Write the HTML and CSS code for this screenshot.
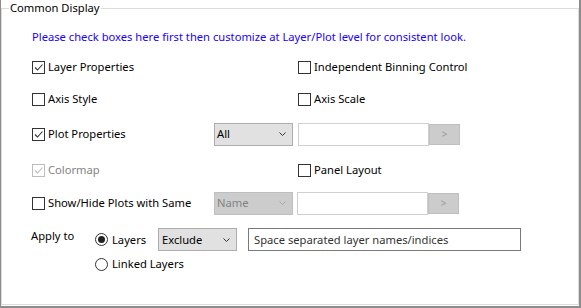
FILE: index.html
```html
<!DOCTYPE html>
<html lang="en">
<head>
    <meta charset="UTF-8">
    <title>Common Display</title>
    <link rel="stylesheet" href="styles.css">
</head>
<body>
    <div class="window">
        <fieldset class="group">
            <legend>Common Display</legend>
            <div class="content">
                <p class="hint">Please check boxes here first then customize at Layer/Plot level for consistent look.</p>

                <div class="options">
                    <label class="check span">
                        <span class="box"><svg width="11" height="11"><polyline points="2,5.5 4.5,8 9.5,2.5" /></svg></span>
                        Layer Properties
                    </label>
                    <label class="check right"><span class="box"></span>Independent Binning Control</label>

                    <label class="check span"><span class="box"></span>Axis Style</label>
                    <label class="check right"><span class="box"></span>Axis Scale</label>

                    <label class="check">
                        <span class="box"><svg width="11" height="11"><polyline points="2,5.5 4.5,8 9.5,2.5" /></svg></span>
                        Plot Properties
                    </label>
                    <div class="select">
                        <span>All</span>
                        <svg width="7" height="4"><polyline points="0.5,0.5 3.5,3.5 6.5,0.5" /></svg>
                    </div>
                    <div class="field">
                        <input type="text">
                        <span class="go">&gt;</span>
                    </div>

                    <label class="check span off">
                        <span class="box"><svg width="11" height="11"><polyline points="2,5.5 4.5,8 9.5,2.5" /></svg></span>
                        Colormap
                    </label>
                    <label class="check right"><span class="box"></span>Panel Layout</label>

                    <label class="check"><span class="box"></span>Show/Hide Plots with Same</label>
                    <div class="select off">
                        <span>Name</span>
                        <svg width="7" height="4"><polyline points="0.5,0.5 3.5,3.5 6.5,0.5" /></svg>
                    </div>
                    <div class="field shift">
                        <input type="text">
                        <span class="go">&gt;</span>
                    </div>
                </div>

                <div class="apply">
                    <span class="apply-label">Apply to</span>
                    <div class="apply-options">
                        <div class="apply-row">
                            <label class="radio"><span class="dot on"></span>Layers</label>
                            <div class="select wide">
                                <span>Exclude</span>
                                <svg width="7" height="4"><polyline points="0.5,0.5 3.5,3.5 6.5,0.5" /></svg>
                            </div>
                            <input type="text" class="names" value="Space separated layer names/indices">
                        </div>
                        <label class="radio linked"><span class="dot"></span>Linked Layers</label>
                    </div>
                </div>
            </div>
        </fieldset>
    </div>
</body>
</html>
```

FILE: styles.css
```css
body {
    margin: 0;
    font-family: "Noto Sans", sans-serif;
    font-size: 11.2px;
    line-height: 16px;
    color: #000;
    background: #fff;
}
.window {
    height: 308px;
    box-sizing: border-box;
    border-left: 1px solid #8c8c8c;
    border-right: 2px solid #8c8c8c;
    border-bottom: 2px solid #8c8c8c;
}
.group {
    margin: 0;
    padding: 0;
    min-width: 0;
    height: 305px;
    box-sizing: border-box;
    border: 1px solid #dcdcdc;
}
legend {
    margin-left: 7px;
    padding: 0 1px;
    line-height: 16px;
}
.content {
    padding-left: 30px;
}
.hint {
    margin: 13px 0 0;
    color: #2000ff;
}
.options {
    display: grid;
    grid-template-columns: 182px 84px 1fr;
    grid-template-rows: 32px 32px 38px 34px 32px;
    align-items: center;
    margin-top: 6px;
}
.check {
    display: flex;
    align-items: center;
    gap: 3px;
}
.check.span {
    grid-column: 1 / 3;
}
.check.right {
    grid-column: 3;
}
.box {
    display: block;
    width: 13px;
    height: 13px;
    box-sizing: border-box;
    border: 1px solid #333;
    background: #fff;
}
.box svg {
    display: block;
}
.box polyline {
    fill: none;
    stroke: #333;
    stroke-width: 1.1;
}
.check.off {
    color: #838383;
}
.check.off .box {
    border-color: #bcbcbc;
}
.check.off .box polyline {
    stroke: #bcbcbc;
}
.select {
    width: 79px;
    height: 23px;
    box-sizing: border-box;
    border: 1px solid #adadad;
    background: #e1e1e1;
    display: flex;
    align-items: center;
    justify-content: space-between;
    padding: 0 6px 0 2px;
}
.select svg {
    display: block;
}
.select polyline {
    fill: none;
    stroke: #333;
    stroke-width: 1;
}
.select.off {
    background: #cccccc;
    border-color: #bfbfbf;
    color: #838383;
}
.select.off polyline {
    stroke: #a8a8a8;
}
.select.wide {
    padding-left: 3px;
}
.field {
    display: flex;
    align-items: center;
}
.field.shift {
    margin-left: -1px;
}
input {
    margin: 0;
    height: 23px;
    box-sizing: border-box;
    font: inherit;
    outline: none;
}
.field input {
    width: 131px;
    border: 1px solid #d0d0d0;
    padding: 0 4px;
}
.go {
    width: 31px;
    height: 21px;
    box-sizing: border-box;
    border: 1px solid #bfbfbf;
    background: #cccccc;
    color: #9a9a9a;
    display: flex;
    align-items: center;
    justify-content: center;
    font-size: 10px;
}
.apply {
    display: flex;
    align-items: flex-start;
    margin-top: 9px;
}
.apply-label {
    width: 64px;
    margin-left: -1px;
}
.apply-row {
    display: flex;
    align-items: center;
    height: 23px;
}
.radio {
    display: flex;
    align-items: center;
    gap: 4px;
    width: 63px;
}
.radio.linked {
    margin-top: 5px;
    width: auto;
}
.dot {
    width: 13px;
    height: 13px;
    box-sizing: border-box;
    border: 1px solid #333;
    border-radius: 50%;
    display: flex;
    align-items: center;
    justify-content: center;
}
.dot.on::after {
    content: "";
    width: 7px;
    height: 7px;
    border-radius: 50%;
    background: #222;
}
.names {
    width: 273px;
    margin-left: 11px;
    border: 1px solid #7a7a7a;
    padding: 0 5px;
    color: #333;
}
```
